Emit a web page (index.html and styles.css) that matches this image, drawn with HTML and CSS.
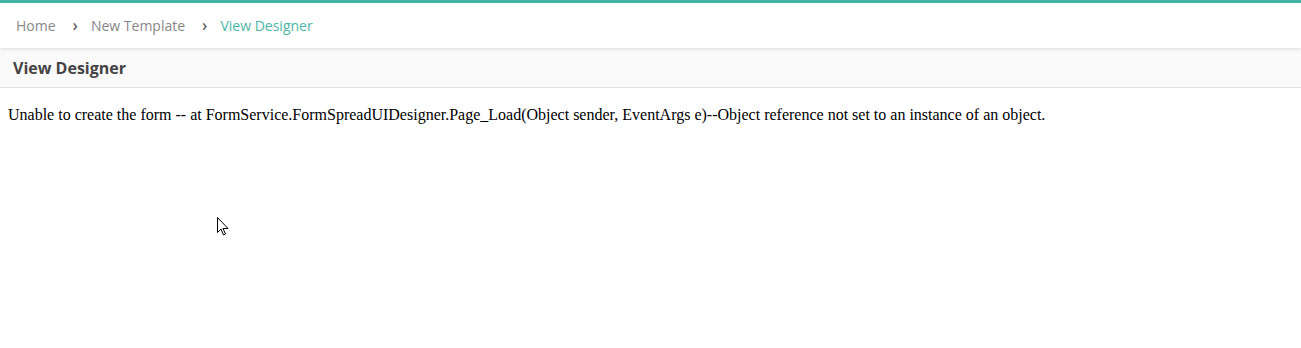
FILE: index.html
```html
<!DOCTYPE html>
<html lang="en">
<head>
    <meta charset="UTF-8">
    <title>View Designer</title>
    <link rel="stylesheet" href="styles.css">
</head>
<body>
    <div class="top-bar"></div>
    <nav class="breadcrumb">
        <a class="crumb" href="#">Home</a>
        <span class="sep">&#x203A;</span>
        <a class="crumb" href="#">New Template</a>
        <span class="sep">&#x203A;</span>
        <span class="crumb current">View Designer</span>
    </nav>
    <div class="panel-header">View Designer</div>
    <div class="content">
        <p class="error">Unable to create the form -- at FormService.FormSpreadUIDesigner.Page_Load(Object sender, EventArgs e)--Object reference not set to an instance of an object.</p>
    </div>
    <svg class="cursor" width="12" height="19" viewBox="0 0 12 19">
        <path d="M0.5 0.5 L0.5 15.5 L4 12 L6.5 18 L8.5 17 L6 11.5 L11 11.5 Z" fill="#fff" stroke="#000" stroke-width="1"/>
    </svg>
</body>
</html>
```

FILE: styles.css
```css
body {
    margin: 0;
    padding: 0;
    background: #fff;
    font-family: "Liberation Serif", serif;
    position: relative;
    min-height: 348px;
}

.top-bar {
    height: 3px;
    background: #45b5a5;
}

.breadcrumb {
    height: 45px;
    display: flex;
    align-items: center;
    padding-left: 16px;
    font-family: "Open Sans", sans-serif;
    font-size: 14px;
    box-shadow: 0 1px 4px rgba(0, 0, 0, 0.12);
    position: relative;
    z-index: 1;
}

.crumb {
    color: #888;
    text-decoration: none;
}

.crumb.current {
    color: #4db6a6;
}

.sep {
    color: #666;
    font-weight: 600;
    font-size: 16px;
    margin: -1px 13px 0 17px;
}

.panel-header {
    height: 39px;
    line-height: 41px;
    padding-left: 13px;
    background: #fafafa;
    border-bottom: 1px solid #e3e3e3;
    font-family: "Open Sans", sans-serif;
    font-size: 16px;
    font-weight: 700;
    color: #444;
}

.content {
    padding: 0 8px;
}

.error {
    margin: 18px 0 0;
    font-size: 16px;
    color: #000;
}

.cursor {
    position: absolute;
    left: 217px;
    top: 217px;
}
```
